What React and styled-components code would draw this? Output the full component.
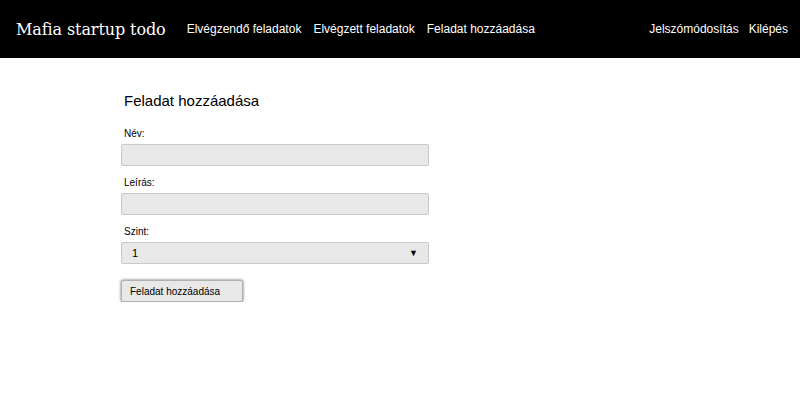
import React from "react";
import styled, { createGlobalStyle } from "styled-components";

const GlobalStyle = createGlobalStyle`
  body {
    margin: 0;
    background: #fff;
    font-family: "Liberation Sans", Arial, sans-serif;
  }
`;

const Header = styled.header`
  display: flex;
  align-items: center;
  justify-content: space-between;
  height: 58px;
  padding: 0 12px 0 16px;
  background: #000;
  color: #fff;
`;

const NavLeft = styled.div`
  display: flex;
  align-items: center;
`;

const Brand = styled.a`
  font-family: "DejaVu Serif", serif;
  font-size: 16px;
  letter-spacing: -0.1px;
  color: #fff;
  margin-right: 21px;
  text-decoration: none;
`;

const NavLinks = styled.nav`
  display: flex;
  gap: ${(p) => p.$gap || 12}px;
`;

const NavLink = styled.a`
  color: #fff;
  font-size: 12px;
  text-decoration: none;
`;

const Main = styled.main`
  padding: 34px 0 0 121px;
  width: 308px;
`;

const Title = styled.h2`
  margin: 0 0 19px 3px;
  font-size: 15px;
  font-weight: normal;
  color: #000;
`;

const Form = styled.form`
  display: flex;
  flex-direction: column;
`;

const Label = styled.label`
  font-size: 10px;
  color: #000;
  margin: 0 0 5px 3px;
`;

const Input = styled.input`
  box-sizing: border-box;
  height: 22px;
  width: 100%;
  margin-bottom: 11px;
  background: #e8e8e8;
  border: 1px solid #c8c8c8;
  border-radius: 2px;
`;

const SelectBox = styled.div`
  box-sizing: border-box;
  height: 22px;
  display: flex;
  align-items: center;
  padding: 0 10px;
  background: #e8e8e8;
  border: 1px solid #c8c8c8;
  border-radius: 2px;
  font-size: 11px;
  color: #000;
  margin-bottom: 16px;
`;

const Arrow = styled.span`
  margin-left: auto;
  font-size: 9px;
`;

const Button = styled.button`
  align-self: flex-start;
  width: 122px;
  height: 22px;
  padding: 0 8px;
  text-align: left;
  font-family: "Liberation Sans", Arial, sans-serif;
  font-size: 10px;
  color: #000;
  background: #e8e8e8;
  border: 1px solid #b0b0b0;
  border-radius: 2px;
  box-shadow: 0 0 3px rgba(0, 0, 0, 0.6);
`;

export default function App() {
  return (
    <>
      <GlobalStyle />
      <Header>
        <NavLeft>
          <Brand>Mafia startup todo</Brand>
          <NavLinks>
            <NavLink>Elvégzendő feladatok</NavLink>
            <NavLink>Elvégzett feladatok</NavLink>
            <NavLink>Feladat hozzáadása</NavLink>
          </NavLinks>
        </NavLeft>
        <NavLinks $gap={10}>
          <NavLink>Jelszómódosítás</NavLink>
          <NavLink>Kilépés</NavLink>
        </NavLinks>
      </Header>
      <Main>
        <Title>Feladat hozzáadása</Title>
        <Form onSubmit={(e) => e.preventDefault()}>
          <Label>Név:</Label>
          <Input />
          <Label>Leírás:</Label>
          <Input />
          <Label>Szint:</Label>
          <SelectBox>
            1<Arrow>▼</Arrow>
          </SelectBox>
          <Button type="submit">Feladat hozzáadása</Button>
        </Form>
      </Main>
    </>
  );
}
